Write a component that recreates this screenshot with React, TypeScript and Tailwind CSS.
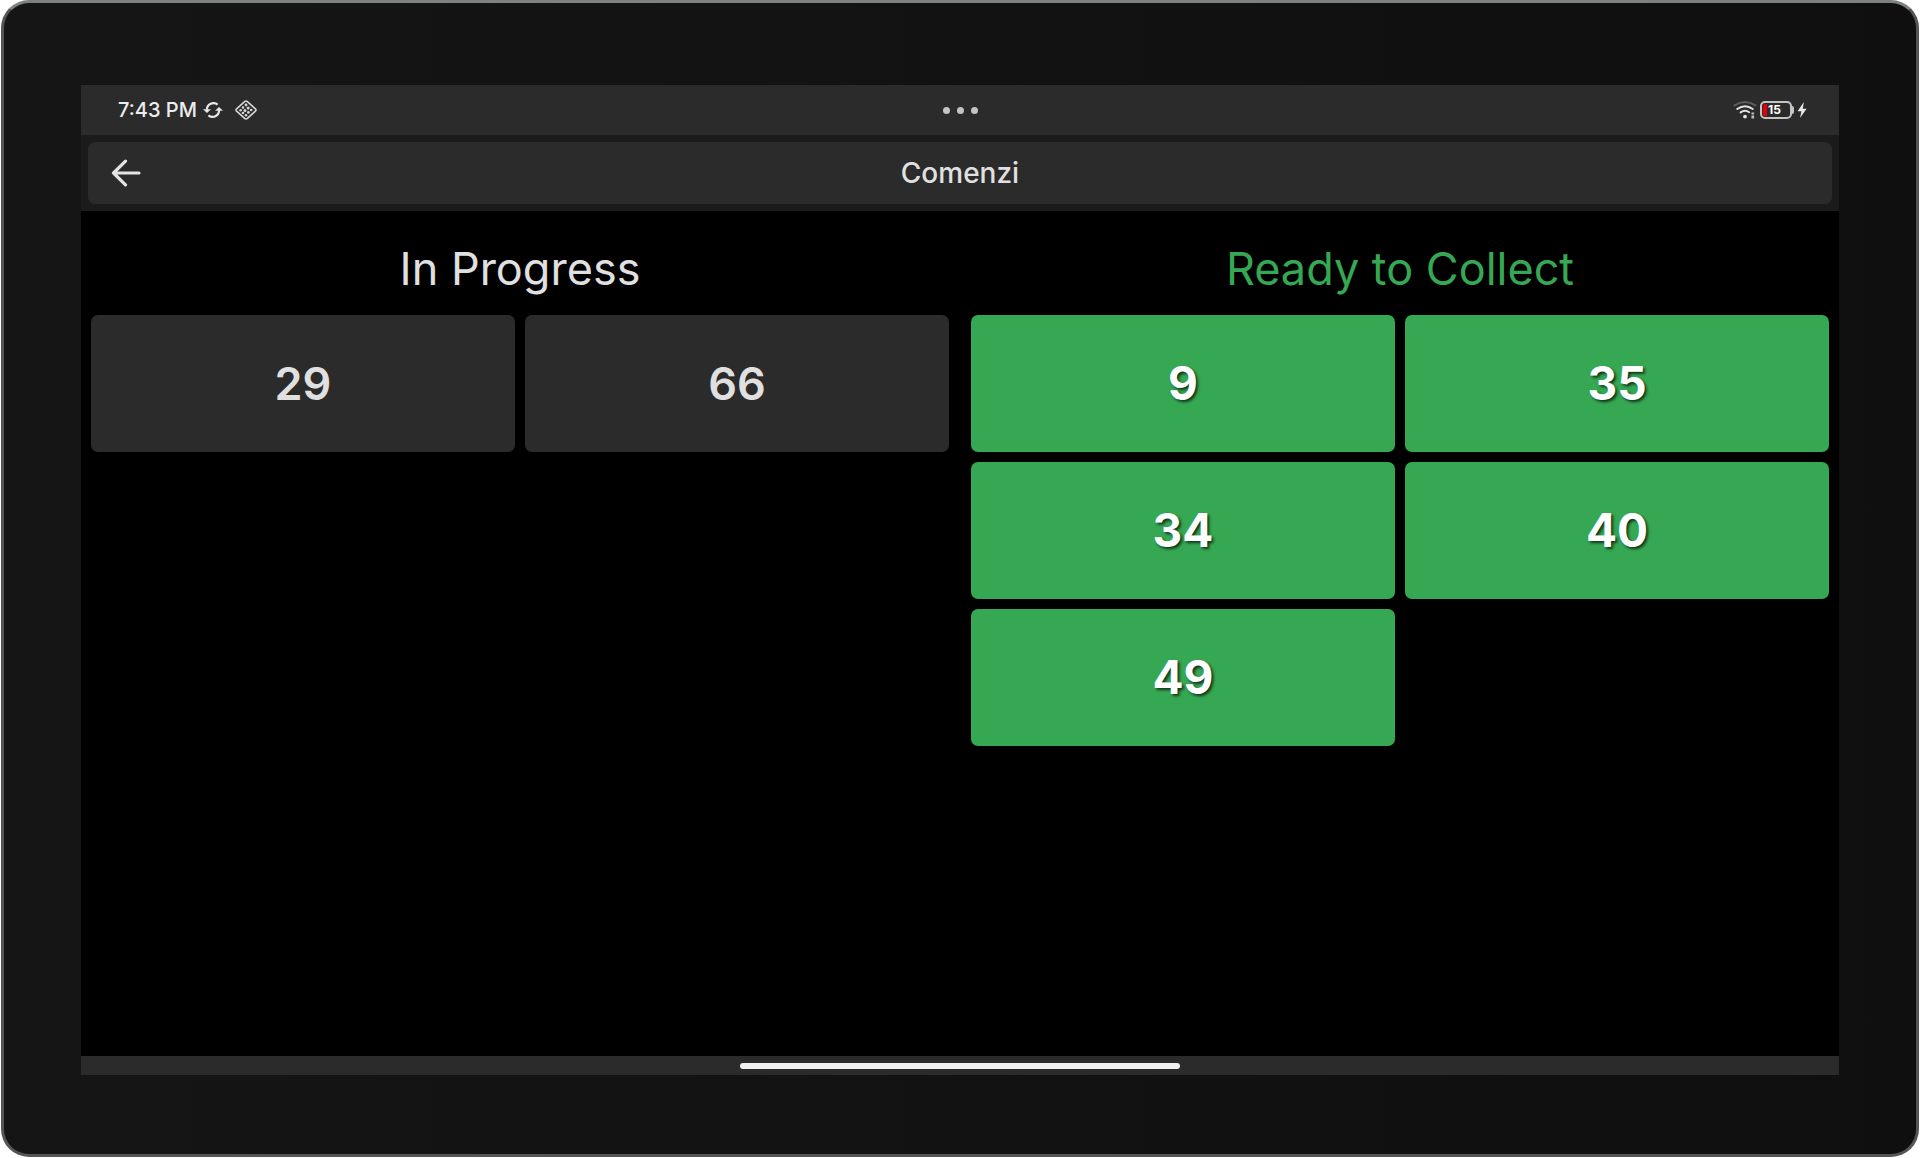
import React from "react";

const inProgress = [29, 66];
const ready = [9, 35, 34, 40, 49];

function SyncIcon() {
  return (
    <svg viewBox="0 0 20 16" className="h-4 w-5" fill="none" stroke="#e6e6e6" strokeWidth="2.2" aria-hidden="true">
      <path d="M14.6 2.6A6.6 6.6 0 0 0 3.9 7.8" />
      <path d="M5.4 13.4A6.6 6.6 0 0 0 16.1 8.2" />
      <path d="M0 7.2h8L4 11z" fill="#e6e6e6" stroke="none" />
      <path d="M12 8.8h8L16 5z" fill="#e6e6e6" stroke="none" />
    </svg>
  );
}

function DiamondIcon() {
  return (
    <svg viewBox="0 0 22 20" className="h-5 w-[22px]" fill="none" stroke="#d6d6d6" aria-hidden="true">
      <path d="M9.6 1.6Q11 .4 12.4 1.6L20.4 8.8Q21.6 10 20.4 11.2L12.4 18.4Q11 19.6 9.6 18.4L1.6 11.2Q.4 10 1.6 8.8z" strokeWidth="1.6" />
      <g fill="#d6d6d6" stroke="none">
        <circle cx="11" cy="5" r="1.4" />
        <circle cx="8" cy="7.6" r="1.3" />
        <circle cx="13.2" cy="8" r="1.5" />
        <circle cx="5.6" cy="10.2" r="1.3" />
        <circle cx="10" cy="10.4" r="1.5" />
        <circle cx="16.2" cy="10" r="1.3" />
        <circle cx="8" cy="13" r="1.3" />
        <circle cx="13.4" cy="12.4" r="1.4" />
        <circle cx="11" cy="15.2" r="1.3" />
      </g>
    </svg>
  );
}

function WifiIcon() {
  return (
    <svg viewBox="0 0 24 20" className="h-5 w-6" fill="none" strokeWidth="2" strokeLinecap="round" aria-hidden="true">
      <path d="M1.5 5.4Q12 -1.4 22.5 5.4" stroke="#5c5c5c" />
      <path d="M4.2 9Q12 3.4 19.8 9" stroke="#e2e2e2" />
      <path d="M7.6 12.4Q12 9.2 16.2 12.2" stroke="#e2e2e2" />
      <circle cx="12" cy="16.6" r="1.9" fill="#e2e2e2" />
      <path d="M19.8 12.6v2M19.8 15.6v3" stroke="#bdbdbd" strokeWidth="2.6" strokeLinecap="butt" />
    </svg>
  );
}

function Battery() {
  return (
    <div className="flex items-center">
      <div className="flex h-[18px] w-8 items-center rounded-[5px] border-2 border-[#c4c4c4] p-px">
        <span className="h-3 w-1 rounded-l-xs bg-[#e60000]" />
        <span className="pl-px text-[12px] leading-3 font-bold text-white">15</span>
      </div>
      <span className="h-2 w-[2px] rounded-r-xs bg-[#c4c4c4]" />
    </div>
  );
}

function BoltIcon() {
  return (
    <svg viewBox="0 0 10 16" className="h-4 w-[10px]" fill="#e8e8e8" aria-hidden="true">
      <path d="M6.8 0 .6 9.2H4.4L3 16 9.6 6.8H5.8z" />
    </svg>
  );
}

function Tile({ value, done }: { value: number; done?: boolean }) {
  return (
    <li
      className={
        done
          ? "flex h-[137px] items-center justify-center rounded-[7px] bg-[#36a853] text-[46px] font-bold text-white [text-shadow:2px_2px_3px_rgba(0,0,0,0.7)]"
          : "flex h-[137px] items-center justify-center rounded-[7px] bg-[#2b2b2b] text-[45px] font-semibold text-[#e0e0e0]"
      }
    >
      {value}
    </li>
  );
}

export default function App() {
  return (
    <div className="flex min-h-screen bg-white px-px pb-px font-['Inter',sans-serif]">
      <div className="flex flex-1 flex-col rounded-[28px] border-3 border-[#555555] border-t-[#7d827e] bg-linear-to-r from-[#151515] via-[#121212] to-[#0f0f0f] px-[77px] pt-[82px] pb-[79px]">
        <div className="flex flex-1 flex-col bg-black">
          <div className="grid h-[50px] grid-cols-[1fr_auto_1fr] items-center bg-[#2b2b2b] px-8">
            <div className="flex items-center pl-[5px]">
              <time className="text-[20px] leading-6 font-medium text-[#ededed]">7:43 PM</time>
              <span className="ml-[6px]"><SyncIcon /></span>
              <span className="ml-3"><DiamondIcon /></span>
            </div>
            <div className="flex justify-center gap-[7px]">
              <span className="size-[7px] rounded-full bg-[#c4c4c4]" />
              <span className="size-[7px] rounded-full bg-[#c4c4c4]" />
              <span className="size-[7px] rounded-full bg-[#c4c4c4]" />
            </div>
            <div className="flex items-center justify-end gap-[3px]">
              <WifiIcon />
              <Battery />
              <BoltIcon />
            </div>
          </div>

          <header className="bg-[#1b1b1b] p-[7px]">
            <div className="grid h-[62px] grid-cols-[1fr_auto_1fr] items-center rounded-[7px] bg-[#2b2b2b] px-[23px]">
              <button type="button" aria-label="Back" className="justify-self-start">
                <svg viewBox="0 0 30 28" className="h-7 w-[30px]" fill="none" stroke="#e4e4e4" strokeWidth="3.2" strokeLinecap="round" strokeLinejoin="round" aria-hidden="true">
                  <path d="M28 14H2.5M14.5 2.2 2.5 14l12 11.8" />
                </svg>
              </button>
              <h1 className="text-[28px] leading-8 font-medium text-[#e0e0e0]">Comenzi</h1>
            </div>
          </header>

          <main className="grid flex-1 grid-cols-2 content-start px-[10px] pt-8">
            <section className="pr-[11px]">
              <h2 className="text-center text-[45px] leading-[52px] text-[#e0e0e0]">In Progress</h2>
              <ul className="mt-5 grid grid-cols-2 gap-[10px]">
                {inProgress.map((n) => <Tile key={n} value={n} />)}
              </ul>
            </section>
            <section className="pl-[11px]">
              <h2 className="text-center text-[45px] leading-[52px] text-[#36a853]">Ready to Collect</h2>
              <ul className="mt-5 grid grid-cols-2 gap-[10px]">
                {ready.map((n) => <Tile key={n} value={n} done />)}
              </ul>
            </section>
          </main>

          <footer className="flex h-[19px] items-center justify-center bg-[#2b2b2b]">
            <span className="h-[6px] w-1/4 rounded-full bg-[#f0f0f0]" />
          </footer>
        </div>
      </div>
    </div>
  );
}
